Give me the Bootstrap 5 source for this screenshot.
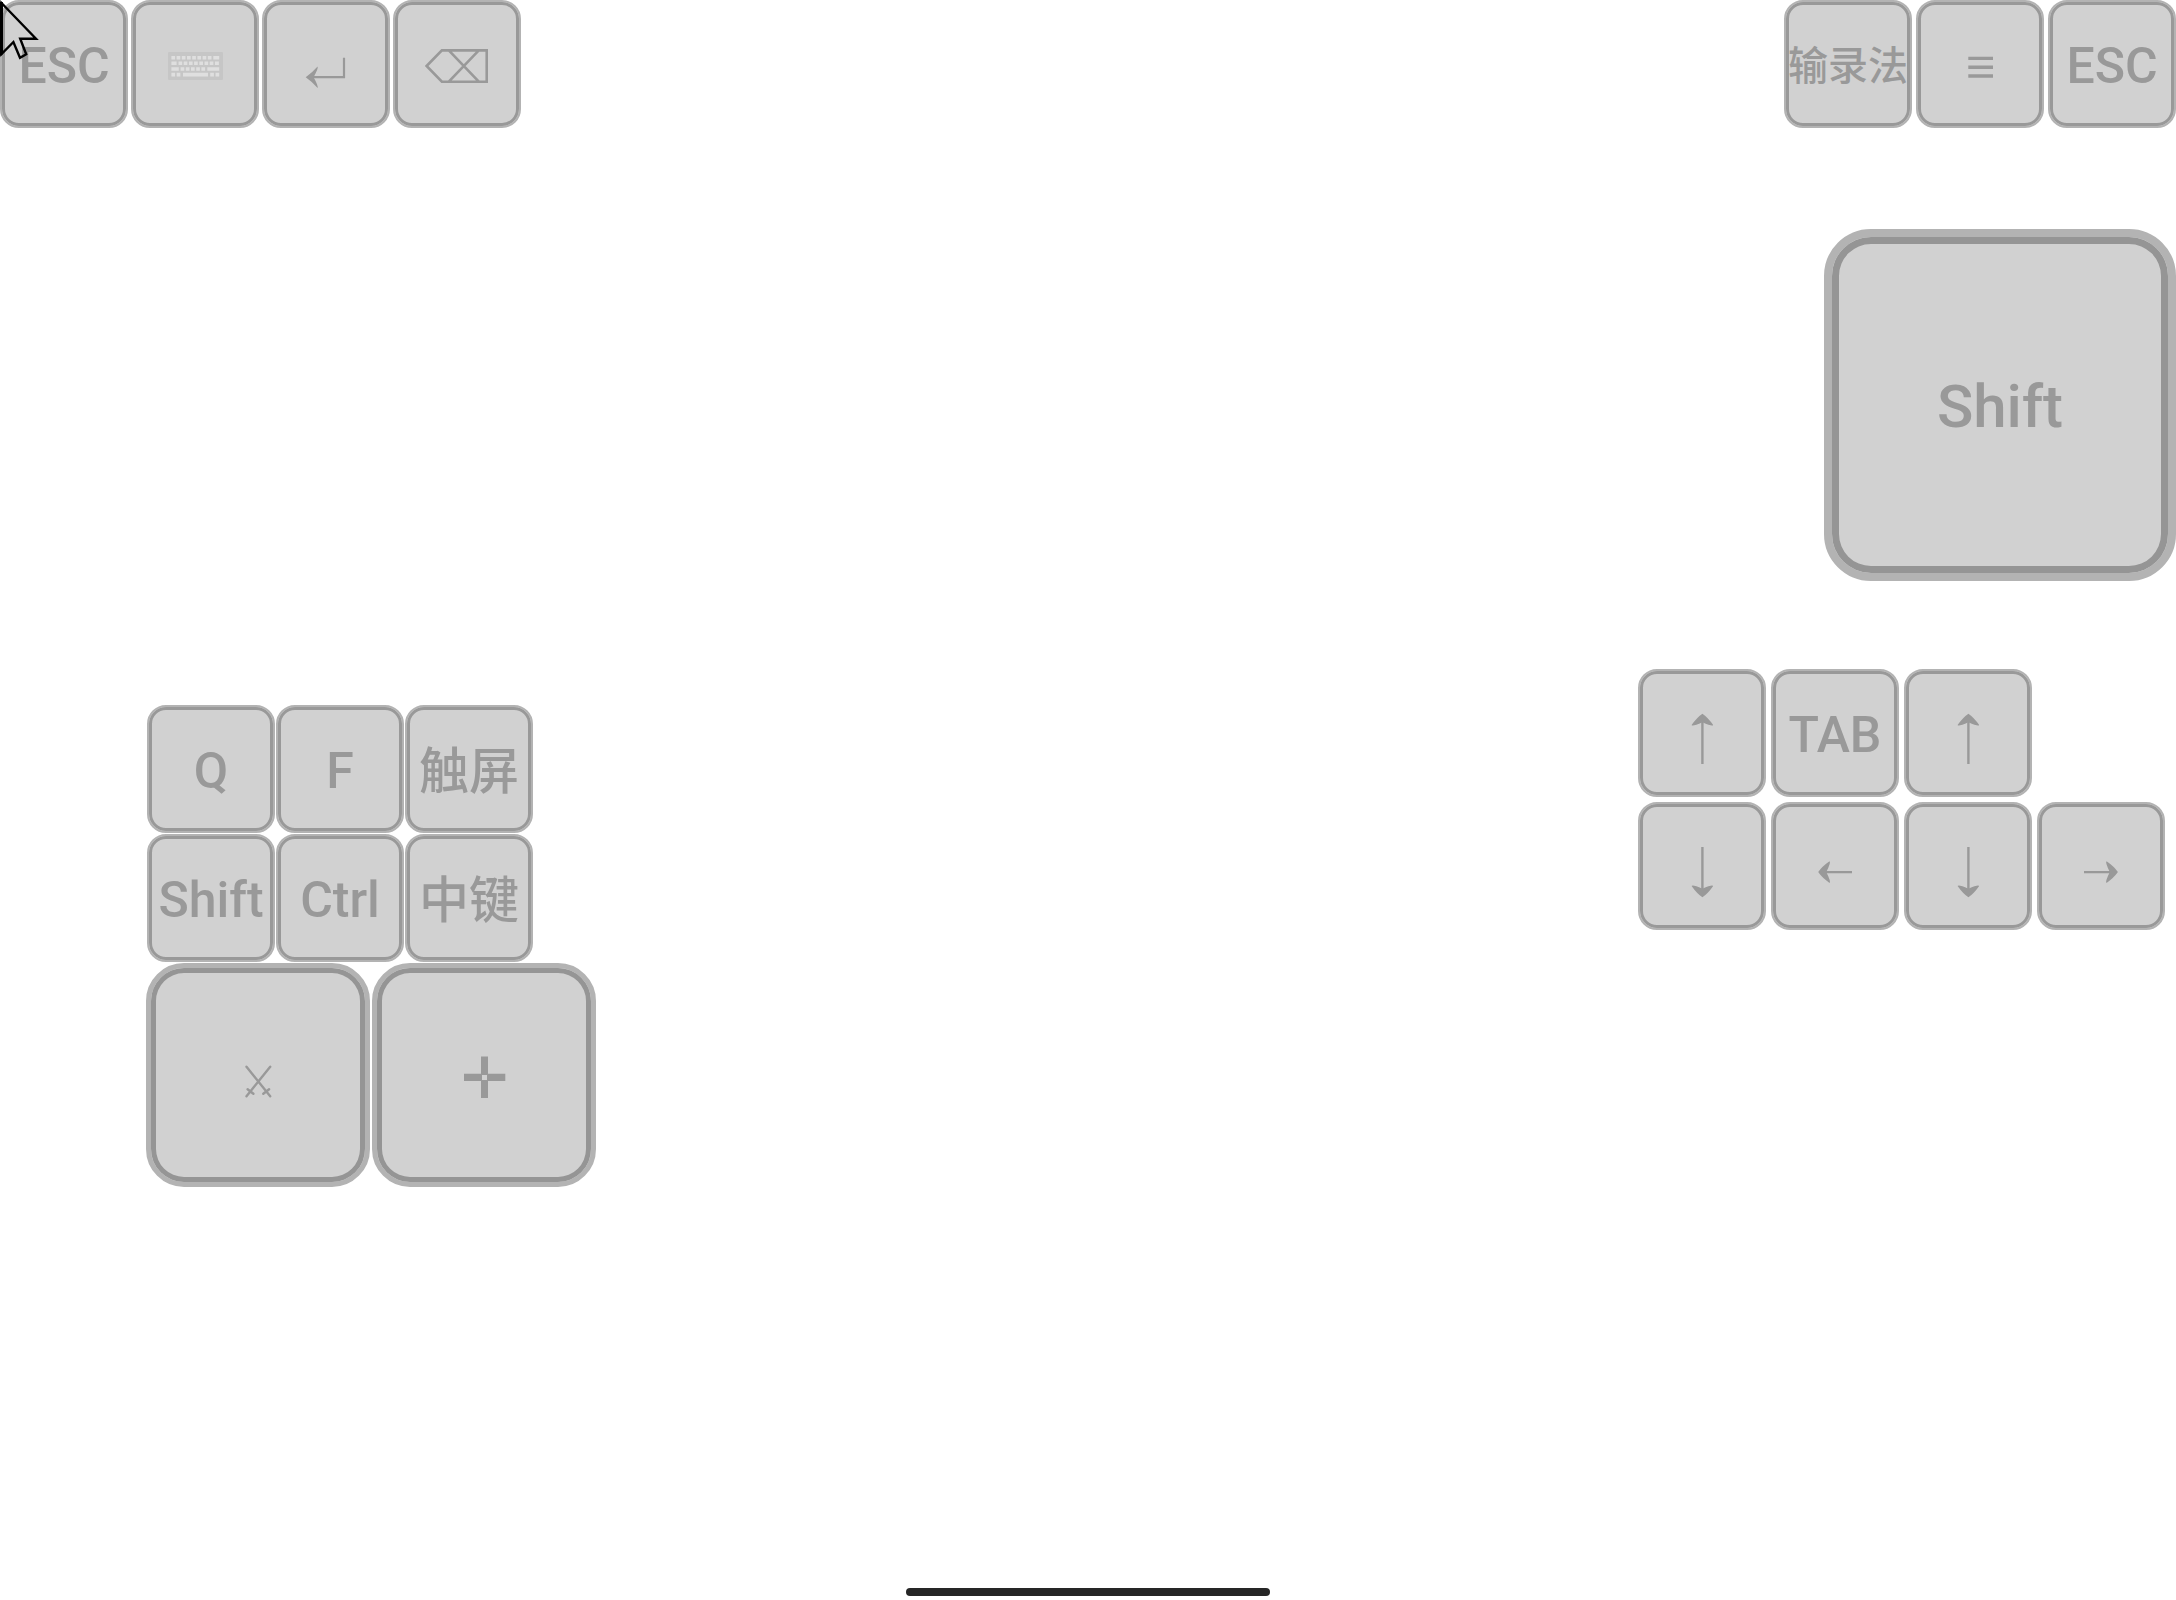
<!DOCTYPE html>
<html lang="zh-CN">
<head>
<meta charset="utf-8">
<meta name="viewport" content="width=device-width, initial-scale=1">
<title>虚拟按键</title>
<link href="https://cdn.jsdelivr.net/npm/bootstrap@5.3.0/dist/css/bootstrap.min.css" rel="stylesheet">
<style>
  body { background: #fff; font-family: Roboto, "Noto Sans CJK SC", sans-serif; }

  .keycap {
    --size: 128px; --outer: 2px; --inner: 3px;
    width: var(--size); height: var(--size); flex: none;
    display: flex; align-items: center; justify-content: center;
    padding: 3px 0 0; overflow: hidden; white-space: nowrap;
    border: var(--outer) solid #b3b3b3; border-radius: 19px;
    box-shadow: inset 0 0 0 var(--inner) #999;
    background: #d1d1d1; color: #999;
    font-size: 50px; font-weight: 500; line-height: 1;
  }
  .keycap-md { --size: 224px; --outer: 5px; --inner: 5px; border-radius: 38px; box-shadow: inset 0 0 0 var(--inner) #959595; }
  .keycap-lg { --size: 352px; --outer: 8px; --inner: 7px; border-radius: 47px; font-size: 60px; box-shadow: inset 0 0 0 var(--inner) #959595; }
  .keycap-han { padding-top: 6px; }
  .keycap-ime { font-size: 40px; }
  .keycap-icon { padding: 0; }
  .keycap-icon svg { width: 100%; height: 100%; flex: none; fill: none; stroke: #999; }
  .keycap-icon .solid { fill: #999; stroke: none; }

  .bar-start { gap: 3px; }
  .bar-end { gap: 4px; }
  .side-start { padding: 577px 0 0 146px; gap: 1px; }
  .side-end { padding-top: 101px; gap: 88px; }
  .letters { display: grid; grid-template-columns: repeat(3, 128px); gap: 1px; padding: 0 1px; }
  .actions { gap: 2px; }
  .arrows { display: grid; grid-template-columns: repeat(4, 128px); gap: 5px; margin-right: 11px; }
  .arrows .row-start { grid-column-start: 1; }

  .pointer { position: absolute; top: 0; left: 0; width: 42px; height: 64px; pointer-events: none; }
  .home-line { width: 364px; height: 8px; border-radius: 4px; background: #262626; margin-bottom: 4px; }
</style>
<script src="https://cdn.jsdelivr.net/npm/bootstrap@5.3.0/dist/js/bootstrap.bundle.min.js"></script>
</head>
<body class="d-flex flex-column min-vh-100 position-relative">

<header class="d-flex justify-content-between">
  <div class="d-flex bar-start">
    <button type="button" class="keycap">ESC</button>
    <button type="button" class="keycap keycap-icon" aria-label="键盘">
      <svg viewBox="2 2 124 124">
        <rect x="37" y="52" width="55" height="28" rx="1" fill="#c6c6c6" stroke="none"/>
        <g stroke="#dfdfdf" stroke-width="3.6">
          <path d="M40.4 57.7h47.8" stroke-dasharray="3.7 1.5 3.7 1.5 3.7 1.5 3.7 1.5 3.7 1.5 3.7 1.5 3.7 1.5 3.7 1.8 6 9"/>
          <path d="M40.4 63.2h47.8" stroke-dasharray="5.2 1.9 3.7 1.5 3.7 1.5 3.7 1.5 3.7 1.5 3.7 1.5 3.7 1.5 3.7 1.5 4 9"/>
          <path d="M40.4 69h47.8" stroke-dasharray="7.4 1.8 3.7 1.5 3.7 1.5 3.7 1.5 3.7 1.5 3.7 2.2 12 9"/>
          <path d="M40.4 74.6h47.8" stroke-dasharray="3.7 1.6 3.7 2.6 25 2.2 3.7 1.6 3.7 9"/>
        </g>
      </svg>
    </button>
    <button type="button" class="keycap keycap-icon" aria-label="回车">
      <svg viewBox="2 2 124 124">
        <path d="M50 77.2H82V57.8" stroke-width="2.2"/>
        <path class="solid" d="M43.7 77.2Q50 73 55.6 66.6Q56.5 68.5 51.6 77.2Q56.5 86 55.6 88Q50 81.5 43.7 77.2Z"/>
      </svg>
    </button>
    <button type="button" class="keycap keycap-icon" aria-label="退格">
      <svg viewBox="2 2 124 124" stroke-width="2.6">
        <path d="M33.6 66L48.9 50.4H93.7V81.7H48.9ZM55.8 50.4L85.8 81.7M85.8 50.4L55.8 81.7"/>
      </svg>
    </button>
  </div>
  <div class="d-flex bar-end">
    <button type="button" class="keycap keycap-han keycap-ime">输录法</button>
    <button type="button" class="keycap keycap-icon" aria-label="菜单">
      <svg viewBox="2 2 124 124" stroke-width="3.4"><path d="M52.3 58.4H77M52.3 67.2H77M52.3 76H77"/></svg>
    </button>
    <button type="button" class="keycap">ESC</button>
  </div>
</header>

<main class="d-flex justify-content-between align-items-start">
  <section class="d-flex flex-column side-start" aria-label="左侧按键">
    <div class="letters">
      <button type="button" class="keycap">Q</button>
      <button type="button" class="keycap">F</button>
      <button type="button" class="keycap keycap-han">触屏</button>
      <button type="button" class="keycap">Shift</button>
      <button type="button" class="keycap">Ctrl</button>
      <button type="button" class="keycap keycap-han">中键</button>
    </div>
    <div class="d-flex actions">
      <button type="button" class="keycap keycap-md keycap-icon" aria-label="攻击">
        <svg viewBox="5 5 214 214" stroke-width="2.4" stroke-linecap="round">
          <path d="M100.5 103.8L124.2 133.2M124.2 103.8L100.5 133.2M101.6 126.2L107.4 130.8M123.1 126.2L117.3 130.8"/>
        </svg>
      </button>
      <button type="button" class="keycap keycap-md keycap-icon" aria-label="准星">
        <svg viewBox="5 5 214 214">
          <path class="solid" d="M92 110.8H109V93.5H116V110.8H133.3V118H116V135H109V118H92Z"/>
          <rect x="110" y="112" width="5" height="5" fill="#d1d1d1" stroke="none"/>
        </svg>
      </button>
    </div>
  </section>

  <section class="d-flex flex-column align-items-end side-end" aria-label="右侧按键">
    <button type="button" class="keycap keycap-lg">Shift</button>
    <div class="arrows">
      <button type="button" class="keycap keycap-icon" aria-label="上">
        <svg viewBox="2 2 124 124"><path d="M64.4 95V50" stroke-width="2.4"/><path class="solid" d="M64.4 44.7Q70 48.5 75.2 56Q74.5 57.8 64.4 53.3Q54.3 57.8 53.6 56Q58.8 48.5 64.4 44.7Z"/></svg>
      </button>
      <button type="button" class="keycap">TAB</button>
      <button type="button" class="keycap keycap-icon" aria-label="上">
        <svg viewBox="2 2 124 124"><path d="M64.4 95V50" stroke-width="2.4"/><path class="solid" d="M64.4 44.7Q70 48.5 75.2 56Q74.5 57.8 64.4 53.3Q54.3 57.8 53.6 56Q58.8 48.5 64.4 44.7Z"/></svg>
      </button>
      <button type="button" class="keycap keycap-icon row-start" aria-label="下">
        <svg viewBox="2 2 124 124"><path d="M64.4 45V90" stroke-width="2.4"/><path class="solid" d="M64.4 95.3Q70 91.5 75.2 84Q74.5 82.2 64.4 86.7Q54.3 82.2 53.6 84Q58.8 91.5 64.4 95.3Z"/></svg>
      </button>
      <button type="button" class="keycap keycap-icon" aria-label="左">
        <svg viewBox="2 2 124 124"><path d="M81 70.1H52" stroke-width="2.4"/><path class="solid" d="M47.2 70.1Q51 64.5 58.5 59.3Q60.3 60 55.3 70.1Q60.3 80.2 58.5 80.9Q51 75.7 47.2 70.1Z"/></svg>
      </button>
      <button type="button" class="keycap keycap-icon" aria-label="下">
        <svg viewBox="2 2 124 124"><path d="M64.4 45V90" stroke-width="2.4"/><path class="solid" d="M64.4 95.3Q70 91.5 75.2 84Q74.5 82.2 64.4 86.7Q54.3 82.2 53.6 84Q58.8 91.5 64.4 95.3Z"/></svg>
      </button>
      <button type="button" class="keycap keycap-icon" aria-label="右">
        <svg viewBox="2 2 124 124"><path d="M47 70.1H76" stroke-width="2.4"/><path class="solid" d="M80.9 70.1Q77.1 64.5 69.6 59.3Q67.8 60 72.8 70.1Q67.8 80.2 69.6 80.9Q77.1 75.7 80.9 70.1Z"/></svg>
      </button>
    </div>
  </section>
</main>

<footer class="mt-auto d-flex justify-content-center">
  <div class="home-line"></div>
</footer>

<svg class="pointer" viewBox="0 0 42 64" fill="none" stroke="#000" stroke-width="2.4" aria-hidden="true">
  <path d="M1.5 3L36 38.7H20.2L26.2 54.3L20 57.8L13.4 42L1.5 54Z"/>
  <path d="M0 2H3V54L0 56Z" fill="#000" stroke="none"/>
</svg>
</body>
</html>
